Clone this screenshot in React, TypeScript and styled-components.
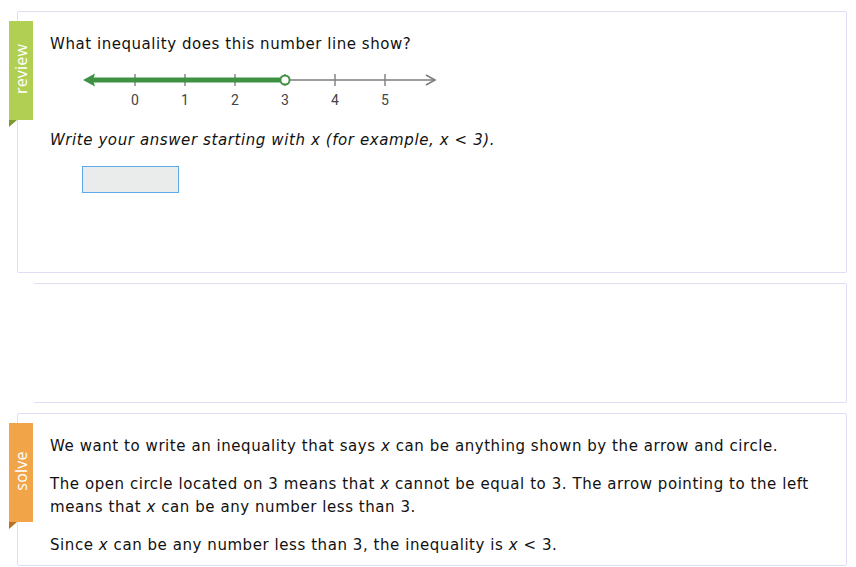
import styled, { createGlobalStyle } from 'styled-components';

const GlobalStyle = createGlobalStyle`
  body {
    margin: 0;
    background: #ffffff;
    font-family: "DejaVu Sans", Verdana, sans-serif;
    color: #111111;
  }
`;

const Page = styled.div`
  display: flex;
  flex-direction: column;
  padding-top: 11px;
  width: 856px;
  height: 567px;
  box-sizing: border-box;
  overflow: hidden;
`;

const Card = styled.div<{ $indent: number; $height: number; $noLeft?: boolean }>`
  position: relative;
  box-sizing: border-box;
  margin-left: ${({ $indent }) => $indent}px;
  width: ${({ $indent }) => 847 - $indent}px;
  height: ${({ $height }) => $height}px;
  border: 1px solid #dfdcf3;
  border-left-color: ${({ $noLeft }) => ($noLeft ? 'transparent' : '#dfdcf3')};
  border-radius: 2px;
  padding: 21px 0 0 32px;
  & + & {
    margin-top: 10px;
  }
`;

const Tab = styled.div<{ $color: string; $fold: string; $height: number }>`
  position: absolute;
  left: -9px;
  top: 9px;
  width: 24px;
  height: ${({ $height }) => $height}px;
  background: ${({ $color }) => $color};
  display: flex;
  align-items: center;
  justify-content: center;

  &::after {
    content: '';
    position: absolute;
    left: 0;
    bottom: -7px;
    border-top: 7px solid ${({ $fold }) => $fold};
    border-left: 8px solid transparent;
    transform: scaleX(-1);
    transform-origin: 4px 0;
  }
`;

const TabLabel = styled.span`
  transform: rotate(-90deg);
  color: #ffffff;
  font-family: "Open Sans", "DejaVu Sans", sans-serif;
  font-size: 16px;
  white-space: nowrap;
  letter-spacing: 0.2px;
  margin-top: -4px;
`;

const Question = styled.p`
  margin: 0;
  font-size: 15px;
  line-height: 23px;
  letter-spacing: 0.55px;
`;

const Hint = styled.p`
  margin: 20px 0 0;
  font-size: 15px;
  line-height: 23px;
  font-style: italic;
  letter-spacing: 0.6px;
`;

const LineWrap = styled.div`
  margin: 11px 0 0 30px;
  height: 42px;
`;

const AnswerBox = styled.div`
  margin: 14px 0 0 32px;
  width: 97px;
  height: 27px;
  box-sizing: border-box;
  background: #eaeceb;
  border: 1px solid #5ea9e8;
`;

const Para = styled.p`
  margin: 0;
  font-size: 15px;
  line-height: 23px;
  letter-spacing: 0.56px;
  & + & {
    margin-top: 15px;
  }
`;

const GREEN = '#3f9243';
const GRAY = '#7d7d7d';
const ticks = [0, 1, 2, 3, 4, 5];

const NumberLine = () => (
  <svg width="360" height="42" viewBox="0 0 360 42">
    <line x1="208" y1="13" x2="354" y2="13" stroke={GRAY} strokeWidth="1.6" />
    <polyline points="346,8 355,13 346,18" fill="none" stroke={GRAY} strokeWidth="1.6" />
    {ticks.map((t) => (
      <g key={t}>
        <line x1={55 + t * 50} y1="7" x2={55 + t * 50} y2="19" stroke={GRAY} strokeWidth="1.4" />
        <text
          x={55 + t * 50}
          y="38"
          textAnchor="middle"
          fontSize="14"
          fill="#444444"
          fontFamily="Roboto, sans-serif"
        >
          {t}
        </text>
      </g>
    ))}
    <line x1="10" y1="13" x2="201" y2="13" stroke={GREEN} strokeWidth="5" />
    <polygon points="3,13 15,6.5 13,13 15,19.5" fill={GREEN} />
    <circle cx="205" cy="13" r="4.6" fill="#ffffff" stroke={GREEN} strokeWidth="2" />
  </svg>
);

const X = () => <i>x</i>;

export default function App() {
  return (
    <>
      <GlobalStyle />
      <Page>
        <Card $indent={17} $height={262}>
          <Tab $color="#b1cf53" $fold="#7f9a2c" $height={99}>
            <TabLabel>review</TabLabel>
          </Tab>
          <Question>What inequality does this number line show?</Question>
          <LineWrap>
            <NumberLine />
          </LineWrap>
          <Hint>Write your answer starting with x (for example, x &lt; 3).</Hint>
          <AnswerBox />
        </Card>
        <Card $indent={33} $height={120} $noLeft />
        <Card $indent={17} $height={153}>
          <Tab $color="#f2a548" $fold="#b8731f" $height={99}>
            <TabLabel>solve</TabLabel>
          </Tab>
          <Para>
            We want to write an inequality that says <X /> can be anything shown by the arrow and circle.
          </Para>
          <Para>
            The open circle located on 3 means that <X /> cannot be equal to 3. The arrow pointing to the left
            means that <X /> can be any number less than 3.
          </Para>
          <Para>
            Since <X /> can be any number less than 3, the inequality is <X /> &lt; 3.
          </Para>
        </Card>
      </Page>
    </>
  );
}
